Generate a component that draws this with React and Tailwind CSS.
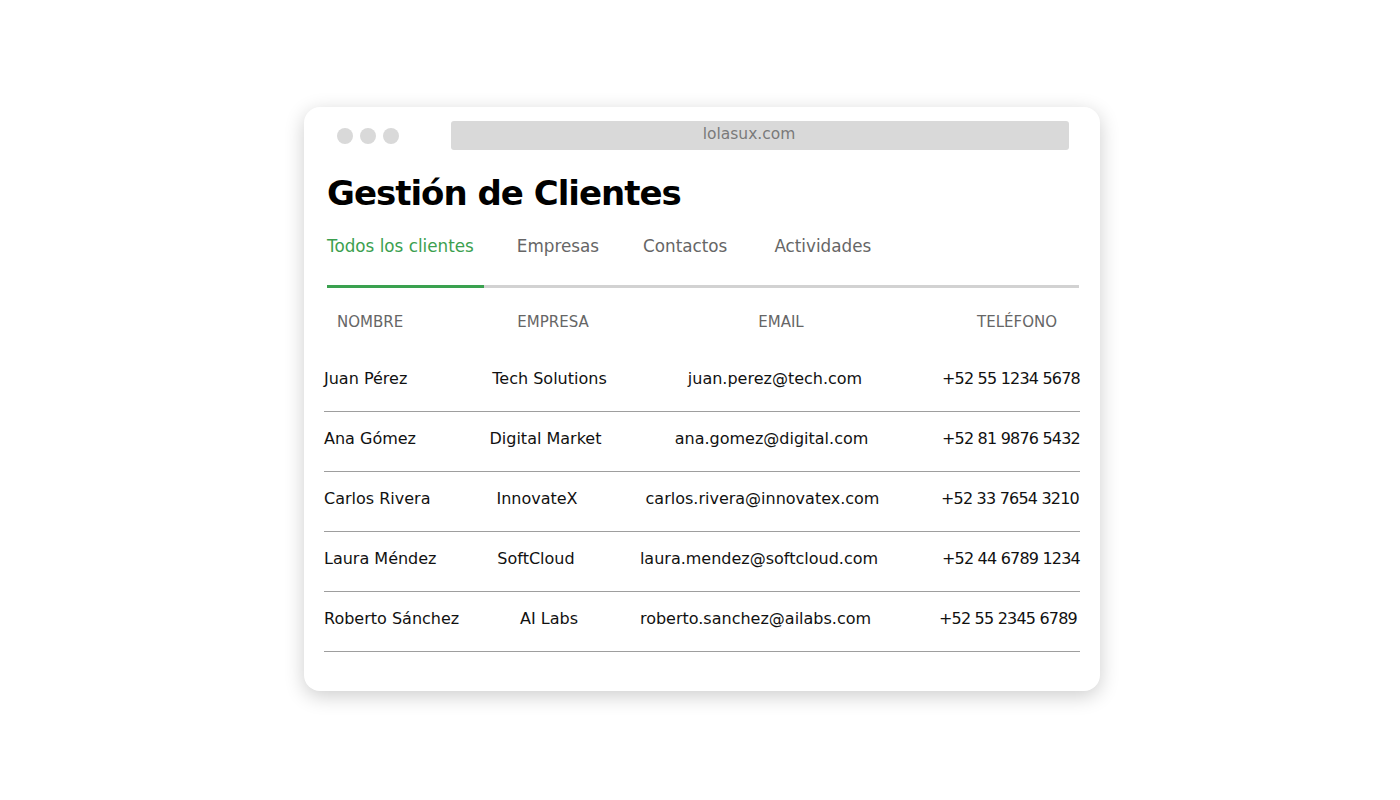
export default function App() {
  const rows = [
    { n: "Juan Pérez", c: "Tech Solutions", e: "juan.perez@tech.com", p: "+52 55 1234 5678", co: "pl-[9px]", eo: "pl-[20px]", po: "" },
    { n: "Ana Gómez", c: "Digital Market", e: "ana.gomez@digital.com", p: "+52 81 9876 5432", co: "pl-[1px]", eo: "pl-[13px]", po: "" },
    { n: "Carlos Rivera", c: "InnovateX", e: "carlos.rivera@innovatex.com", p: "+52 33 7654 3210", co: "pr-[16px]", eo: "pr-[5px]", po: "pr-[1px]" },
    { n: "Laura Méndez", c: "SoftCloud", e: "laura.mendez@softcloud.com", p: "+52 44 6789 1234", co: "pr-[18px]", eo: "pr-[12px]", po: "" },
    { n: "Roberto Sánchez", c: "AI Labs", e: "roberto.sanchez@ailabs.com", p: "+52 55 2345 6789", co: "pl-[8px]", eo: "pr-[19px]", po: "pr-[3px]" },
  ];
  const tabs = [
    { t: "Empresas", c: "ml-[43px]" },
    { t: "Contactos", c: "ml-[44px]" },
    { t: "Actividades", c: "ml-[47px]" },
  ];
  return (
    <div className="w-[1400px] h-[800px] bg-white pt-[107px] pl-[304px]" style={{ fontFamily: '"DejaVu Sans", sans-serif' }}>
      <div className="w-[796px] h-[584px] rounded-[16px] bg-white shadow-[0_5px_20px_rgba(0,0,0,0.2)]">
        <div className="flex items-center pt-[14px] pl-[33px] pr-[31px]">
          <div className="flex gap-[7px]">
            <div className="w-4 h-4 rounded-full bg-[#d9d9d9]"></div>
            <div className="w-4 h-4 rounded-full bg-[#d9d9d9]"></div>
            <div className="w-4 h-4 rounded-full bg-[#d9d9d9]"></div>
          </div>
          <div className="ml-[52px] flex-1 h-[29px] rounded-[3px] bg-[#d9d9d9] flex items-center justify-center text-[15.5px] text-[#7a7a7a] pb-[1px] pr-[22px]">
            lolasux.com
          </div>
        </div>
        <h1 className="mt-[22px] ml-[23px] text-[34px] leading-[42px] font-bold tracking-[-1px] text-black">
          Gestión de Clientes
        </h1>
        <div className="ml-[23px] mr-[21px] mt-[22px]">
          <div className="flex text-[16.8px] leading-[20px]">
            <span className="text-[#3c9f4f]">Todos los clientes</span>
            {tabs.map((t) => (
              <span key={t.t} className={"text-[#666666] " + t.c}>{t.t}</span>
            ))}
          </div>
          <div className="flex mt-[29px] items-end">
            <div className="w-[157px] h-[3px] bg-[#3aa14f]"></div>
            <div className="flex-1 h-[3px] bg-[#d2d2d2]"></div>
          </div>
        </div>
        <div className="ml-[20px] mr-[20px]">
          <div className="grid grid-cols-[140px_162px_278px_176px] pt-[23px] pb-[19px] text-[15px] leading-[22px] text-[#666666] uppercase">
            <div className="pl-[13px]">Nombre</div>
            <div className="text-center pl-[16px]">Empresa</div>
            <div className="text-center pl-[32px]">Email</div>
            <div className="text-right pr-[23px]">Teléfono</div>
          </div>
          {rows.map((r) => (
            <div key={r.n} className="grid grid-cols-[140px_162px_278px_176px] pt-[15px] pb-[20px] border-b border-[#9e9e9e] text-[16px] leading-[24px] text-[#111111] whitespace-nowrap">
              <div>{r.n}</div>
              <div className={"text-center " + r.co}>{r.c}</div>
              <div className={"text-center " + r.eo}>{r.e}</div>
              <div className={"text-right tracking-[-0.8px] " + r.po}>{r.p}</div>
            </div>
          ))}
        </div>
      </div>
    </div>
  );
}
